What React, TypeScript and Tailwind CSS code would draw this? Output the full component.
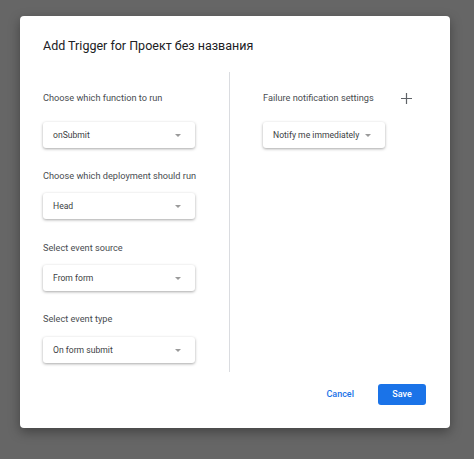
const FONT = "font-['Roboto','Liberation_Sans',sans-serif]";

function Caret() {
  return (
    <svg width="6" height="3" viewBox="0 0 6 3" className="shrink-0">
      <path d="M0 0h6L3 3z" fill="#9a9a9a" />
    </svg>
  );
}

function Dropdown({ value, className }: { value: string; className: string }) {
  return (
    <div
      className={`flex h-[26px] items-center justify-between whitespace-nowrap rounded-[3px] bg-white pl-[10px] pr-[14px] text-[8.6px] text-[#3c4043] shadow-[0_1px_3px_rgba(0,0,0,0.35)] ${className}`}
    >
      <span>{value}</span>
      <Caret />
    </div>
  );
}

const FIELDS = [
  { label: 'Choose which function to run', value: 'onSubmit', labelTop: 'mt-[18px]', boxTop: 'mt-[16px]' },
  { label: 'Choose which deployment should run', value: 'Head', labelTop: 'mt-[20px]', boxTop: 'mt-[9px]' },
  { label: 'Select event source', value: 'From form', labelTop: 'mt-[21px]', boxTop: 'mt-[9px]' },
  { label: 'Select event type', value: 'On form submit', labelTop: 'mt-[20px]', boxTop: 'mt-[10px]' },
];

export default function App() {
  return (
    <div className={`h-[459px] w-[474px] overflow-hidden bg-[#666666] pl-[20px] pt-[16px] ${FONT}`}>
      <div className="flex h-[412px] w-[430px] flex-col rounded-[4px] bg-white pl-[23px] pt-[20px] shadow-[0_4px_12px_rgba(0,0,0,0.35)]">
        <h1 className="h-[20px] text-[12.5px] leading-[20px] text-[#202124]">Add Trigger for Проект без названия</h1>

        <div className="mt-[16px] flex h-[300px]">
          <div className="flex w-[186px] flex-col">
            {FIELDS.map((f) => (
              <div key={f.label} className="flex flex-col">
                <div className={`h-[16px] text-[9.2px] leading-[16px] text-[#4a4d51] ${f.labelTop}`}>{f.label}</div>
                <Dropdown value={f.value} className={`w-[152px] ${f.boxTop}`} />
              </div>
            ))}
          </div>

          <div className="h-[300px] w-px bg-[#dadce0]" />

          <div className="flex flex-1 flex-col pl-[33px] pr-[38px]">
            <div className="mt-[18px] flex h-[16px] items-center justify-between text-[9.2px] leading-[16px] text-[#4a4d51]">
              <span>Failure notification settings</span>
              <svg width="11" height="11" viewBox="0 0 11 11">
                <path d="M5.5 0v11M0 5.5h11" stroke="#5f6368" strokeWidth="1.2" />
              </svg>
            </div>
            <Dropdown value="Notify me immediately" className="mt-[16px] w-[122px]" />
          </div>
        </div>

        <div className="mt-[12px] flex items-center justify-end gap-[10px] pr-[24px]">
          <button className="h-[21px] px-[14px] text-[9px] font-medium text-[#1a73e8]">Cancel</button>
          <button className="h-[21px] w-[48px] rounded-[3px] bg-[#1a73e8] text-[9px] font-medium text-white">Save</button>
        </div>
      </div>
    </div>
  );
}
